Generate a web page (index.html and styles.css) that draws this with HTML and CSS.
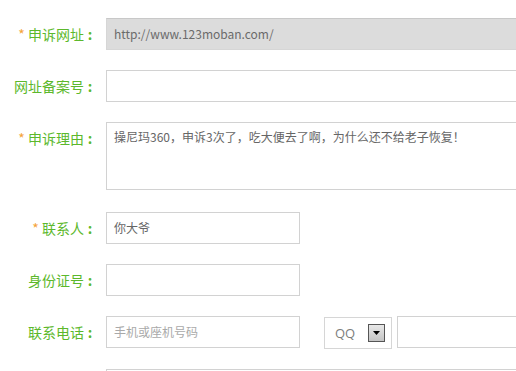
FILE: index.html
```html
<!DOCTYPE html>
<html lang="zh-CN">
<head>
<meta charset="utf-8">
<link rel="stylesheet" href="styles.css">
</head>
<body>
<form class="form">
  <div class="row">
    <label class="label"><span class="req">*</span> 申诉网址<span class="colon">:</span></label>
    <div class="field long disabled">http://www.123moban.com/</div>
  </div>
  <div class="row">
    <label class="label">网址备案号<span class="colon">:</span></label>
    <div class="field long"></div>
  </div>
  <div class="row row-area">
    <label class="label"><span class="req">*</span> 申诉理由<span class="colon">:</span></label>
    <div class="field long area">操尼玛360，申诉3次了，吃大便去了啊，为什么还不给老子恢复！</div>
  </div>
  <div class="row">
    <label class="label"><span class="req">*</span> 联系人<span class="colon">:</span></label>
    <div class="field short">你大爷</div>
  </div>
  <div class="row">
    <label class="label">身份证号<span class="colon">:</span></label>
    <div class="field short"></div>
  </div>
  <div class="row">
    <label class="label">联系电话<span class="colon">:</span></label>
    <div class="field short placeholder">手机或座机号码</div>
    <div class="select">
      <span class="select-text">QQ</span>
      <span class="select-btn"><svg width="7" height="4" viewBox="0 0 7 4"><path d="M0 0h7L3.5 4z" fill="#000"/></svg></span>
    </div>
    <div class="field rest"></div>
  </div>
  <div class="row">
    <label class="label"></label>
    <div class="field long"></div>
  </div>
</form>
</body>
</html>
```
FILE: styles.css
```css
html, body {
  margin: 0;
  padding: 0;
  background: #fff;
  overflow: hidden;
}
body {
  font-family: "Noto Sans CJK SC", "Open Sans", sans-serif;
  font-size: 13px;
  color: #666;
}
.form {
  padding-top: 18px;
  width: 516px;
  height: 371px;
  box-sizing: border-box;
  overflow: hidden;
}
.row {
  display: flex;
  align-items: flex-start;
  margin-bottom: 20px;
}
.row-area {
  margin-bottom: 22px;
}
.label {
  flex: none;
  width: 96px;
  margin-right: 10px;
  text-align: right;
  line-height: 32px;
  height: 32px;
  color: #5cb82c;
  font-size: 14px;
  white-space: nowrap;
}
.colon {
  display: inline-block;
  width: 12px;
  text-align: center;
  font-weight: bold;
}
.req {
  color: #f5a33a;
}
.field {
  flex: none;
  box-sizing: border-box;
  height: 32px;
  border: 1px solid #d2d2d2;
  background: #fff;
  padding: 0 7px;
  line-height: 30px;
  font-size: 12px;
  color: #666;
  white-space: nowrap;
}
.long {
  width: 440px;
}
.short {
  width: 194px;
}
.disabled {
  background: #dcdcdc;
  border-color: #d6d6d6;
  border-top-color: #c8c8c8;
  color: #6b6b6b;
}
.area {
  height: 68px;
  line-height: 20px;
  padding-top: 4px;
}
.placeholder {
  color: #a9a9a9;
}
.select {
  flex: none;
  box-sizing: border-box;
  width: 68px;
  height: 32px;
  margin-left: 24px;
  margin-top: 1px;
  border: 1px solid #d6d6d6;
  display: flex;
  align-items: center;
  justify-content: space-between;
  padding: 0 6px 0 10px;
}
.select-text {
  font-family: "Open Sans", sans-serif;
  font-size: 13px;
  color: #7d7d7d;
}
.select-btn {
  box-sizing: border-box;
  width: 17px;
  height: 18px;
  border: 1px solid #555;
  background: linear-gradient(#e8e8e8, #c4c4c4);
  display: flex;
  align-items: center;
  justify-content: center;
}
.rest {
  margin-left: 5px;
  width: 140px;
}
```
